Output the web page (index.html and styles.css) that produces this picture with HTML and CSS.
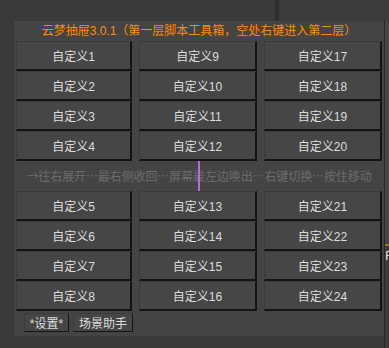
FILE: index.html
```html
<!DOCTYPE html>
<html lang="zh-CN">
<head>
    <meta charset="UTF-8">
    <title>云梦抽屉</title>
    <link rel="stylesheet" href="styles.css">
</head>
<body>

    <!-- strip above the drawer -->
    <div class="top-strip"></div>

    <div class="middle">
        <div class="left-gap"></div>

        <!-- Drawer panel -->
        <div class="drawer">
            <div class="drawer-title">云梦抽屉3.0.1（第一层脚本工具箱，空处右键进入第二层）</div>

            <div class="grid">
                <button class="cell">自定义1</button>
                <button class="cell">自定义9</button>
                <button class="cell">自定义17</button>
                <button class="cell">自定义2</button>
                <button class="cell">自定义10</button>
                <button class="cell">自定义18</button>
                <button class="cell">自定义3</button>
                <button class="cell">自定义11</button>
                <button class="cell">自定义19</button>
                <button class="cell">自定义4</button>
                <button class="cell">自定义12</button>
                <button class="cell">自定义20</button>
            </div>

            <div class="hint">→往右展开…最右侧收回…屏幕最左边唤出…右键切换…按住移动</div>

            <div class="grid">
                <button class="cell">自定义5</button>
                <button class="cell">自定义13</button>
                <button class="cell">自定义21</button>
                <button class="cell">自定义6</button>
                <button class="cell">自定义14</button>
                <button class="cell">自定义22</button>
                <button class="cell">自定义7</button>
                <button class="cell">自定义15</button>
                <button class="cell">自定义23</button>
                <button class="cell">自定义8</button>
                <button class="cell">自定义16</button>
                <button class="cell">自定义24</button>
            </div>

            <div class="tools">
                <button class="tool-btn settings">*设置*</button>
                <button class="tool-btn scene">场景助手</button>
            </div>

            <!-- drag marker -->
            <div class="marker"></div>
        </div>

        <div class="side-strip">
            <div class="side-edge">R</div>
        </div>
    </div>

    <!-- strip below the drawer -->
    <div class="bottom-strip"></div>

</body>
</html>
```

FILE: styles.css
```css
body {
    margin: 0;
    width: 389px;
    height: 348px;
    overflow: hidden;
    background: #3a3a3a;
    font-family: "Liberation Sans", "Noto Sans CJK SC", sans-serif;
    font-size: 12px;
}

/* Background strips */
.top-strip {
    height: 21px;
    background: linear-gradient(to right, #3a3a3a 275px, #2f2f2f 275px, #2f2f2f 279px, #3c3c3c 279px);
}
.bottom-strip {
    height: 12px;
    background: linear-gradient(to right, #3a3a3a 276px, #323232 276px, #323232 279px, #8b7634 279px, #8b7634 281px, #2a2a2a 281px);
}

.middle {
    display: flex;
}
.left-gap {
    width: 14px;
    flex-shrink: 0;
}

/* Drawer */
.drawer {
    position: relative;
    width: 366px;
    height: 315px;
    padding: 0 2px;
    background: #444444;
    flex-shrink: 0;
}
.drawer-title {
    height: 20px;
    line-height: 20px;
    text-align: center;
    color: #ff8a00;
    white-space: nowrap;
}

.grid {
    display: grid;
    grid-template-columns: 116px 118px 118px;
    grid-auto-rows: 30px;
    column-gap: 7px;
}
.cell {
    margin: 0;
    padding: 0;
    background: #464646;
    color: #dcdcdc;
    font: inherit;
    border-top: 1px solid #3b3b3b;
    border-left: 1px solid #3b3b3b;
    border-right: 2px solid #141414;
    border-bottom: 2px solid #141414;
    white-space: nowrap;
}

.hint {
    height: 30px;
    line-height: 30px;
    text-align: center;
    color: #6c6c6c;
    font-family: "Noto Sans CJK SC", sans-serif;
    letter-spacing: -0.1px;
    white-space: nowrap;
}

.tools {
    display: flex;
    gap: 4px;
    margin-top: 2px;
    padding-left: 8px;
}
.tool-btn {
    margin: 0;
    padding: 0;
    height: 19px;
    background: #464646;
    color: #dcdcdc;
    font: inherit;
    border-top: 1px solid #3b3b3b;
    border-left: 1px solid #3b3b3b;
    border-right: 1px solid #141414;
    border-bottom: 1px solid #141414;
    white-space: nowrap;
}
.settings {
    width: 45px;
}
.scene {
    width: 60px;
}

.marker {
    position: absolute;
    left: 184px;
    top: 140px;
    width: 2px;
    height: 30px;
    background: #b86ad8;
}

/* Window edge on the right */
.side-strip {
    width: 5px;
    border-left: 1px solid #262626;
    background: #474747;
    overflow: hidden;
}
.side-edge {
    margin-top: 223px;
    border-top: 2px solid #8b7634;
    padding-top: 3px;
    height: 100px;
    background: #3e3e3e;
    color: #dddddd;
    font-size: 13px;
    line-height: 14px;
}
```
